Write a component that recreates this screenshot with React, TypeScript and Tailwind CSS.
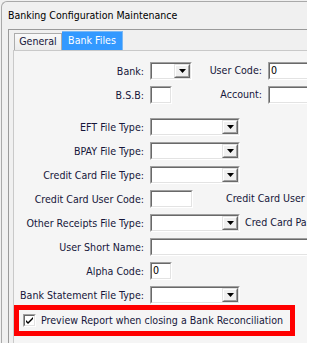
import React from "react";

const font = { fontFamily: '"DejaVu Sans Condensed", "Liberation Sans", Arial, sans-serif' };

function Sunken({ className, children }: { className: string; children?: React.ReactNode }) {
  return (
    <div className={`h-[18px] shrink-0 border border-t-[#a0a0a0] border-l-[#a0a0a0] border-b-white border-r-white ${className}`}>
      <div className="h-full border border-t-[#696969] border-l-[#696969] border-b-[#e3e3e3] border-r-[#e3e3e3] bg-white flex items-center">
        {children}
      </div>
    </div>
  );
}

function Arrow() {
  return (
    <div className="w-[16px] h-full shrink-0 border border-t-[#e3e3e3] border-l-[#e3e3e3] border-b-[#696969] border-r-[#696969]">
      <div className="h-full border border-t-white border-l-white border-b-[#a0a0a0] border-r-[#a0a0a0] bg-[#f0f0f0] flex items-center justify-center">
        <svg width="7" height="4" viewBox="0 0 7 4">
          <polygon points="0,0 7,0 3.5,4" fill="#000" />
        </svg>
      </div>
    </div>
  );
}

function Combo({ className }: { className: string }) {
  return (
    <Sunken className={className}>
      <div className="flex-1" />
      <Arrow />
    </Sunken>
  );
}

function Label({ children }: { children: React.ReactNode }) {
  return <div className="w-[130px] shrink-0 text-right whitespace-nowrap text-[#16163a] leading-none">{children}</div>;
}

function Row({ label, children, className = "" }: { label: string; children: React.ReactNode; className?: string }) {
  return (
    <div className={`flex items-center h-[18px] gap-[6px] ${className}`}>
      <Label>{label}</Label>
      {children}
    </div>
  );
}

export default function App() {
  return (
    <div className="w-[307px] h-[343px] overflow-hidden bg-[#f0f0f0] text-[10.6px]" style={font}>
      <div className="ml-[1px] mt-[1px] w-[360px] h-[400px] border-l border-t border-[#a9a9a9] rounded-tl-[6px] bg-[#f0f0f0]">
        <div className="h-[27px] flex items-center pl-[6px] text-[10.5px] text-black">Banking Configuration Maintenance</div>
        <div className="ml-[6px] h-[380px] border-l border-t border-[#9a9a9a]">
          <div className="h-[20px] flex items-end pl-[5px]">
            <div className="h-[17px] w-[48px] border-t border-l border-r border-[#acacac] bg-gradient-to-b from-[#f9f9f9] to-[#ebebeb] flex items-center justify-center text-[#16163a]">
              General
            </div>
            <div className="h-[19px] w-[61px] bg-[#3399ff] border-t border-r border-[#7ab8f5] flex items-center justify-center text-white">
              Bank Files
            </div>
          </div>
          <div className="ml-[4px] h-[360px] border-l border-t border-[#c9c9c9] bg-[#f5f5f5] pt-[11px]">
            <div className="flex flex-col gap-[6px]">
              <Row label="Bank:">
                <Combo className="w-[42px]" />
                <div className="w-[64px] shrink-0 text-right whitespace-nowrap text-[#16163a]">User Code:</div>
                <Sunken className="w-[80px]">
                  <span className="pl-[1px] text-black">0</span>
                </Sunken>
              </Row>
              <Row label="B.S.B:">
                <Sunken className="w-[22px]" />
                <div className="w-[84px] shrink-0 text-right whitespace-nowrap text-[#16163a]">Account:</div>
                <Sunken className="w-[80px]" />
              </Row>
            </div>
            <div className="flex flex-col gap-[6px] mt-[14px]">
              <Row label="EFT File Type:">
                <Combo className="w-[90px]" />
              </Row>
              <Row label="BPAY File Type:">
                <Combo className="w-[90px]" />
              </Row>
              <Row label="Credit Card File Type:">
                <Combo className="w-[90px]" />
              </Row>
              <Row label="Credit Card User Code:">
                <Sunken className="w-[43px]" />
                <div className="ml-[27px] shrink-0 whitespace-nowrap text-[#16163a]">Credit Card User Code:</div>
              </Row>
              <Row label="Other Receipts File Type:">
                <Combo className="w-[90px]" />
                <div className="ml-[-1px] shrink-0 whitespace-nowrap text-[#16163a]">Cred Card Password:</div>
              </Row>
              <Row label="User Short Name:">
                <Sunken className="w-[200px]" />
              </Row>
              <Row label="Alpha Code:">
                <Sunken className="w-[22px]">
                  <span className="pl-[1px] text-black">0</span>
                </Sunken>
              </Row>
              <Row label="Bank Statement File Type:">
                <Combo className="w-[90px]" />
              </Row>
            </div>
            <div className="mt-[1px] w-[281px] h-[31px] border-[5px] border-[#ff0000] flex items-center pl-[4px] gap-[5px]">
              <div className="w-[13px] h-[13px] shrink-0 border border-t-[#a0a0a0] border-l-[#a0a0a0] border-b-white border-r-white">
                <div className="w-full h-full border border-t-[#696969] border-l-[#696969] border-b-[#e3e3e3] border-r-[#e3e3e3] bg-white flex items-center justify-center">
                  <svg width="7" height="7" viewBox="0 0 7 7">
                    <path d="M0 3 L2 5 L7 0 L7 2 L2 7 L0 5 Z" fill="#000" />
                  </svg>
                </div>
              </div>
              <span className="text-[#16163a] whitespace-nowrap">Preview Report when closing a Bank Reconciliation</span>
            </div>
          </div>
        </div>
      </div>
    </div>
  );
}
